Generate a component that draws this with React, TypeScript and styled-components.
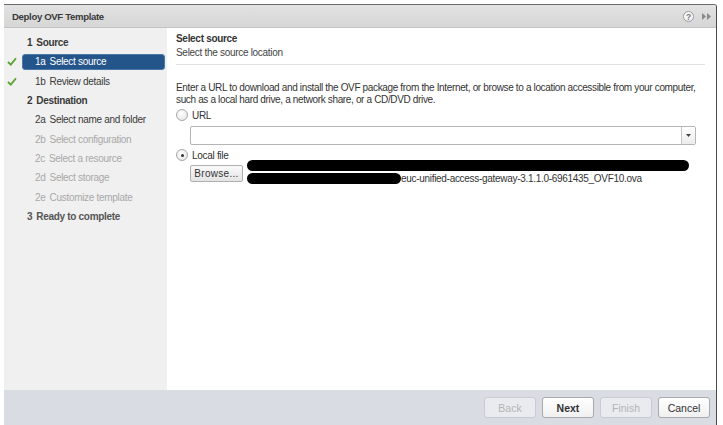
import React from "react";
import styled, { createGlobalStyle } from "styled-components";

const Global = createGlobalStyle`
  html, body { margin: 0; padding: 0; background: #ffffff; }
  body { font-family: "Liberation Sans", Arial, sans-serif; font-size: 10px; letter-spacing: -0.3px; color: #333; }
`;

const Dialog = styled.div`
  margin: 4px 0 0 4px;
  width: 713px;
  height: 421px;
  border-top: 1px solid #6a6a6a;
  border-right: 1px solid #4a4a4a;
  border-top-right-radius: 3px;
  display: flex;
  flex-direction: column;
  box-sizing: border-box;
  background: #fff;
`;

const Header = styled.div`
  height: 22px;
  flex: none;
  display: flex;
  align-items: center;
  padding: 0 5px 0 8px;
  background: linear-gradient(#e2e2e2, #d6d6d6);
  border-bottom: 1px solid #c4c4c4;
  border-top-right-radius: 3px;
`;

const Title = styled.div`
  flex: 1;
  font-weight: bold;
  color: #3a3a3a;
  font-size: 9.6px;
  letter-spacing: -0.35px;
`;

const HeaderIcons = styled.div`
  display: flex;
  align-items: center;
  gap: 8px;
`;

const Body = styled.div`
  flex: 1;
  display: flex;
  min-height: 0;
`;

const Nav = styled.div`
  width: 163px;
  flex: none;
  background: #f0f0f0;
  padding-top: 5px;
  box-sizing: border-box;
`;

const NavRow = styled.div<{ $indent: number; $selected?: boolean; $muted?: boolean; $bold?: boolean }>`
  position: relative;
  height: 19.3px;
  display: flex;
  align-items: center;
  gap: 4px;
  padding-left: ${(p) => p.$indent}px;
  font-size: 10px;
  letter-spacing: -0.3px;
  color: ${(p) => (p.$selected ? "#ffffff" : p.$muted ? "#a8a8a8" : "#3a3a3a")};
  font-weight: ${(p) => (p.$bold ? "bold" : "normal")};
`;

const SelBox = styled.div`
  position: absolute;
  left: 18px;
  right: 2px;
  top: 2px;
  bottom: 2px;
  background: #24558a;
  border: 1px solid #4a78a8;
  border-radius: 3px;
  z-index: 0;
`;

const NavText = styled.span<{ $tone?: string }>`
  position: relative;
  z-index: 1;
  white-space: pre;
  ${(p) => (p.$tone ? `color: ${p.$tone};` : "")}
`;

const Check = styled.svg`
  position: absolute;
  left: 3px;
  top: 5px;
`;

const Content = styled.div`
  flex: 1;
  padding: 4px 11px 0 9px;
  display: flex;
  flex-direction: column;
`;

const PageTitle = styled.div`
  font-weight: bold;
  color: #333;
  line-height: 14px;
`;

const PageSub = styled.div`
  color: #444;
  line-height: 14px;
`;

const Sep = styled.div`
  height: 1px;
  background: #e0e0e0;
  margin: 4px 0 0 0;
`;

const Para = styled.p`
  margin: 17px 0 0 0;
  line-height: 12px;
  color: #333;
  letter-spacing: -0.35px;
`;

const RadioRow = styled.label<{ $top: number }>`
  display: flex;
  align-items: center;
  gap: 4px;
  height: 14px;
  margin-top: ${(p) => p.$top}px;
  color: #333;
`;

const Radio = styled.span<{ $on?: boolean }>`
  width: 10px;
  height: 10px;
  border-radius: 50%;
  border: 1px solid #a8a8a8;
  background: radial-gradient(circle at 40% 35%, #ffffff, #e2e2e2);
  display: flex;
  align-items: center;
  justify-content: center;
  &::after {
    content: "";
    width: 3px;
    height: 3px;
    border-radius: 50%;
    background: ${(p) => (p.$on ? "#333" : "transparent")};
  }
`;

const Indented = styled.div`
  margin-left: 14px;
`;

const Combo = styled.div`
  margin-top: 4px;
  margin-right: 9px;
  height: 19px;
  border: 1px solid #b5b5b5;
  border-radius: 2px;
  display: flex;
  justify-content: flex-end;
  box-sizing: border-box;
  background: #fff;
`;

const ComboBtn = styled.div`
  width: 13px;
  border-left: 1px solid #c6c6c6;
  background: linear-gradient(#ffffff, #ececec);
  display: flex;
  align-items: center;
  justify-content: center;
`;

const FileRow = styled.div`
  display: flex;
  margin-top: -2px;
  gap: 4px;
`;

const Browse = styled.button`
  margin-top: 5px;
  height: 17px;
  width: 53px;
  padding: 0;
  font-family: inherit;
  font-size: 10px;
  color: #333;
  letter-spacing: 0.3px;
  border: 1px solid #b0b0b0;
  border-radius: 2px;
  background: linear-gradient(#fafafa, #e4e4e4);
`;

const FileLines = styled.div`
  display: flex;
  flex-direction: column;
  gap: 2px;
  flex: 1;
`;

const Redact = styled.div<{ $w: number }>`
  width: ${(p) => p.$w}px;
  height: 11px;
  background: #000;
  border-radius: 6px;
  flex: none;
`;

const PathLine = styled.div`
  display: flex;
  align-items: center;
  color: #333;
  letter-spacing: -0.3px;
`;

const Footer = styled.div`
  height: 35px;
  flex: none;
  background: #d9dde3;
  display: flex;
  align-items: center;
  justify-content: flex-end;
  gap: 6px;
  padding-right: 6px;
`;

const FootBtn = styled.button<{ $disabled?: boolean; $primary?: boolean }>`
  width: 52px;
  height: 21px;
  padding: 0;
  font-family: inherit;
  font-size: 10.5px;
  letter-spacing: 0;
  font-weight: ${(p) => (p.$primary ? "bold" : "normal")};
  color: ${(p) => (p.$disabled ? "#b4b4b4" : "#333")};
  border: 1px solid ${(p) => (p.$disabled ? "#c8ccd2" : "#a9a9a9")};
  border-radius: 3px;
  background: ${(p) => (p.$disabled ? "#e9ebee" : "linear-gradient(#ffffff, #f0f0f0)")};
`;

const CheckIcon = () => (
  <Check width="10" height="9" viewBox="0 0 10 9">
    <path d="M1 5 L3.8 7.6 L9 1.2" fill="none" stroke="#5ba32f" strokeWidth="1.8" />
  </Check>
);

type Item = { num: string; label: string; indent: number; bold?: boolean; muted?: boolean; selected?: boolean; check?: boolean };

const items: Item[] = [
  { num: "1", label: "Source", indent: 23, bold: true },
  { num: "1a", label: "Select source", indent: 31, selected: true, check: true },
  { num: "1b", label: "Review details", indent: 31, check: true },
  { num: "2", label: "Destination", indent: 23, bold: true },
  { num: "2a", label: "Select name and folder", indent: 31 },
  { num: "2b", label: "Select configuration", indent: 31, muted: true },
  { num: "2c", label: "Select a resource", indent: 31, muted: true },
  { num: "2d", label: "Select storage", indent: 31, muted: true },
  { num: "2e", label: "Customize template", indent: 31, muted: true },
  { num: "3", label: "Ready to complete", indent: 23, bold: true, muted: true },
];

export default function App() {
  return (
    <>
      <Global />
      <Dialog>
        <Header>
          <Title>Deploy OVF Template</Title>
          <HeaderIcons>
            <svg width="11" height="11" viewBox="0 0 11 11">
              <circle cx="5.5" cy="5.5" r="5" fill="#f4f4f4" stroke="#9a9a9a" />
              <text x="5.5" y="8.6" textAnchor="middle" fontSize="8.5" fontWeight="bold" fill="#777" fontFamily="Liberation Sans, Arial, sans-serif">?</text>
            </svg>
            <svg width="9" height="7" viewBox="0 0 9 7">
              <path d="M0 0 L4 3.5 L0 7 Z M5 0 L9 3.5 L5 7 Z" fill="#8a8a8a" />
            </svg>
          </HeaderIcons>
        </Header>
        <Body>
          <Nav>
            {items.map((it) => {
              const tone = it.bold && it.muted ? "#555" : undefined;
              return (
                <NavRow key={it.num} $indent={it.indent} $selected={it.selected} $muted={it.muted && !it.bold} $bold={it.bold}>
                  {it.check && <CheckIcon />}
                  {it.selected && <SelBox />}
                  <NavText $tone={tone}>{it.num}</NavText>
                  <NavText $tone={tone}>{it.label}</NavText>
                </NavRow>
              );
            })}
          </Nav>
          <Content>
            <PageTitle>Select source</PageTitle>
            <PageSub>Select the source location</PageSub>
            <Sep />
            <Para>
              Enter a URL to download and install the OVF package from the Internet, or browse to a location accessible from your computer,
              <br />
              such as a local hard drive, a network share, or a CD/DVD drive.
            </Para>
            <RadioRow $top={2}>
              <Radio />
              URL
            </RadioRow>
            <Indented>
              <Combo>
                <ComboBtn>
                  <svg width="5" height="3" viewBox="0 0 5 3">
                    <path d="M0 0 L5 0 L2.5 3 Z" fill="#444" />
                  </svg>
                </ComboBtn>
              </Combo>
            </Indented>
            <RadioRow $top={3}>
              <Radio $on />
              Local file
            </RadioRow>
            <Indented>
              <FileRow>
                <Browse>Browse...</Browse>
                <FileLines>
                  <Redact $w={442} />
                  <PathLine>
                    <Redact $w={154} />
                    <span>euc-unified-access-gateway-3.1.1.0-6961435_OVF10.ova</span>
                  </PathLine>
                </FileLines>
              </FileRow>
            </Indented>
          </Content>
        </Body>
        <Footer>
          <FootBtn $disabled>Back</FootBtn>
          <FootBtn $primary>Next</FootBtn>
          <FootBtn $disabled>Finish</FootBtn>
          <FootBtn>Cancel</FootBtn>
        </Footer>
      </Dialog>
    </>
  );
}
